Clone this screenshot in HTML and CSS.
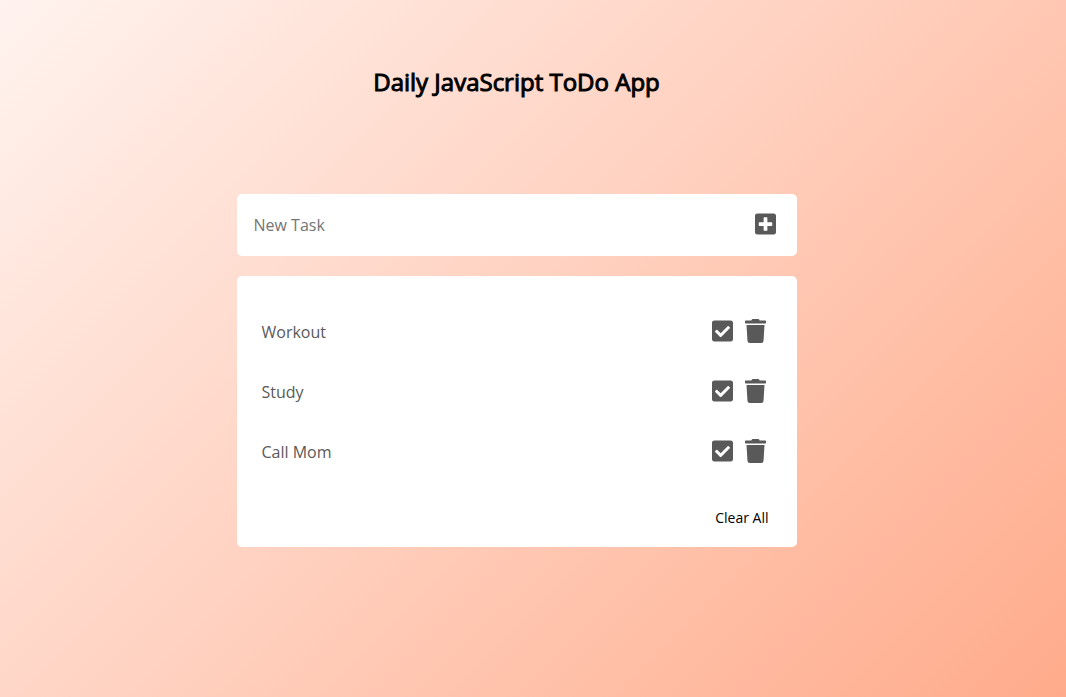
FILE: index.html
```html
<!DOCTYPE html>
<html lang="en">
<head>
<meta charset="utf-8">
<meta name="viewport" content="width=device-width, initial-scale=1">
<title>Daily JavaScript ToDo App</title>
<link rel="stylesheet" href="styles.css">
</head>
<body>
<svg class="sprite" aria-hidden="true">
  <symbol id="plus" viewBox="0 0 448 512"><path d="M400 32H48C21.500 32 0 53.500 0 80v352c0 26.500 21.500 48 48 48h352c26.500 0 48-21.500 48-48V80c0-26.500-21.500-48-48-48zm-32 252c0 6.600-5.400 12-12 12h-92v92c0 6.600-5.400 12-12 12h-56c-6.600 0-12-5.400-12-12v-92H92c-6.600 0-12-5.400-12-12v-56c0-6.600 5.400-12 12-12h92v-92c0-6.600 5.400-12 12-12h56c6.600 0 12 5.400 12 12v92h92c6.600 0 12 5.400 12 12v56z"/></symbol>
  <symbol id="check" viewBox="0 0 448 512"><path d="M400 480H48c-26.510 0-48-21.490-48-48V80c0-26.510 21.490-48 48-48h352c26.510 0 48 21.490 48 48v352c0 26.510-21.490 48-48 48zm-204.686-98.059l184-184c6.248-6.248 6.248-16.379 0-22.627l-22.627-22.627c-6.248-6.248-16.379-6.249-22.628 0L184 302.745l-70.059-70.059c-6.248-6.248-16.379-6.248-22.628 0l-22.627 22.627c-6.248 6.248-6.248 16.379 0 22.627l104 104c6.249 6.250 16.379 6.250 22.628.001z"/></symbol>
  <symbol id="trash" viewBox="0 0 448 512"><path d="M432 32H312l-9.400-18.700A24 24 0 0 0 281.100 0H166.800a23.720 23.720 0 0 0-21.400 13.300L136 32H16A16 16 0 0 0 0 48v32a16 16 0 0 0 16 16h416a16 16 0 0 0 16-16V48a16 16 0 0 0-16-16zM53.200 467a48 48 0 0 0 47.900 45h245.800a48 48 0 0 0 47.900-45L416 128H32z"/></symbol>
</svg>
<main class="app">
  <h1 class="title">Daily JavaScript ToDo App</h1>
  <form class="card new-task">
    <input class="new-task-input" type="text" placeholder="New Task" aria-label="New Task">
    <button class="icon-button" type="button" aria-label="Add task"><svg class="icon"><use href="#plus"/></svg></button>
  </form>
  <section class="card tasks">
    <ul class="task-list">
      <li class="task"><span class="task-name">Workout</span>
        <button class="icon-button" type="button" aria-label="Complete Workout"><svg class="icon"><use href="#check"/></svg></button>
        <button class="icon-button" type="button" aria-label="Delete Workout"><svg class="icon"><use href="#trash"/></svg></button></li>
      <li class="task"><span class="task-name">Study</span>
        <button class="icon-button" type="button" aria-label="Complete Study"><svg class="icon"><use href="#check"/></svg></button>
        <button class="icon-button" type="button" aria-label="Delete Study"><svg class="icon"><use href="#trash"/></svg></button></li>
      <li class="task"><span class="task-name">Call Mom</span>
        <button class="icon-button" type="button" aria-label="Complete Call Mom"><svg class="icon"><use href="#check"/></svg></button>
        <button class="icon-button" type="button" aria-label="Delete Call Mom"><svg class="icon"><use href="#trash"/></svg></button></li>
    </ul>
    <button class="clear" type="button">Clear All</button>
  </section>
</main>
</body>
</html>
```
FILE: styles.css
```css
* {
  box-sizing: border-box;
}

body {
  margin: 0;
  min-height: 100vh;
  padding: 64px 49px 64px 16px;
  background: linear-gradient(135deg, #fff3ef, #ffab8b);
  font-family: "Open Sans", sans-serif;
  color: #000;
}

.sprite {
  position: absolute;
  width: 0;
  height: 0;
}

.app {
  max-width: 560px;
  margin: 0 auto;
}

.title {
  margin: 0 0 94px;
  font-size: 24px;
  line-height: 36px;
  font-weight: 400;
  -webkit-text-stroke: 1px currentColor;
  text-align: center;
}

.card {
  background: #fff;
  border-radius: 5px;
}

.new-task {
  display: flex;
  align-items: center;
  min-height: 62px;
  margin-bottom: 20px;
  padding: 0 21px 2px 17px;
}

.new-task-input {
  flex: 1;
  min-width: 0;
  padding: 2px 0 0;
  border: 0;
  outline: 0;
  background: none;
  font: 400 16px/24px "Open Sans", sans-serif;
  color: #595959;
}

.new-task-input::placeholder {
  color: #757575;
}

.icon-button {
  display: flex;
  padding: 0;
  border: 0;
  background: none;
  color: #595959;
  cursor: pointer;
}

.icon {
  width: 21px;
  height: 24px;
  fill: currentColor;
}

.tasks {
  display: flex;
  flex-direction: column;
  padding: 25px 28px 18px 25px;
}

.task-list {
  margin: 0;
  padding: 0;
  list-style: none;
}

.task {
  display: flex;
  align-items: center;
  gap: 12px;
  min-height: 60px;
  padding-right: 3px;
  font-size: 16px;
  line-height: 24px;
  font-weight: 400;
  color: #595959;
}

.task-name {
  flex: 1;
  padding-top: 2px;
}

.clear {
  align-self: flex-end;
  margin-top: 26px;
  padding: 0;
  border: 0;
  background: none;
  font: 400 14px/22px "Open Sans", sans-serif;
  color: #000;
  cursor: pointer;
}
```
